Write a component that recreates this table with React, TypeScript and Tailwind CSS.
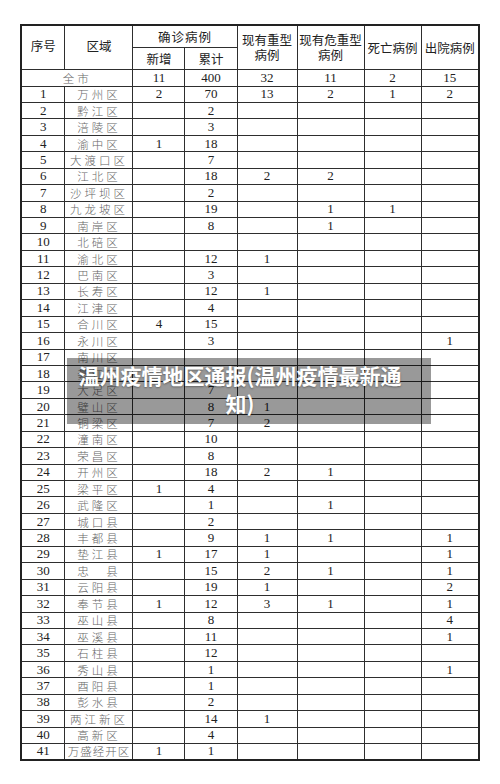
type Row = [string, string, string, string, string, string, string, string];

const rows: Row[] = [
  ['1', '万州区', '2', '70', '13', '2', '1', '2'],
  ['2', '黔江区', '', '2', '', '', '', ''],
  ['3', '涪陵区', '', '3', '', '', '', ''],
  ['4', '渝中区', '1', '18', '', '', '', ''],
  ['5', '大渡口区', '', '7', '', '', '', ''],
  ['6', '江北区', '', '18', '2', '2', '', ''],
  ['7', '沙坪坝区', '', '2', '', '', '', ''],
  ['8', '九龙坡区', '', '19', '', '1', '1', ''],
  ['9', '南岸区', '', '8', '', '1', '', ''],
  ['10', '北碚区', '', '', '', '', '', ''],
  ['11', '渝北区', '', '12', '1', '', '', ''],
  ['12', '巴南区', '', '3', '', '', '', ''],
  ['13', '长寿区', '', '12', '1', '', '', ''],
  ['14', '江津区', '', '4', '', '', '', ''],
  ['15', '合川区', '4', '15', '', '', '', ''],
  ['16', '永川区', '', '3', '', '', '', '1'],
  ['17', '南川区', '', '', '', '', '', ''],
  ['18', '綦江区', '', '', '', '', '', ''],
  ['19', '大足区', '', '7', '', '', '', ''],
  ['20', '璧山区', '', '8', '1', '', '', ''],
  ['21', '铜梁区', '', '7', '2', '', '', ''],
  ['22', '潼南区', '', '10', '', '', '', ''],
  ['23', '荣昌区', '', '8', '', '', '', ''],
  ['24', '开州区', '', '18', '2', '1', '', ''],
  ['25', '梁平区', '1', '4', '', '', '', ''],
  ['26', '武隆区', '', '1', '', '1', '', ''],
  ['27', '城口县', '', '2', '', '', '', ''],
  ['28', '丰都县', '', '9', '1', '1', '', '1'],
  ['29', '垫江县', '1', '17', '1', '', '', '1'],
  ['30', '忠　县', '', '15', '2', '1', '', '1'],
  ['31', '云阳县', '', '19', '1', '', '', '2'],
  ['32', '奉节县', '1', '12', '3', '1', '', '1'],
  ['33', '巫山县', '', '8', '', '', '', '4'],
  ['34', '巫溪县', '', '11', '', '', '', '1'],
  ['35', '石柱县', '', '12', '', '', '', ''],
  ['36', '秀山县', '', '1', '', '', '', '1'],
  ['37', '酉阳县', '', '1', '', '', '', ''],
  ['38', '彭水县', '', '2', '', '', '', ''],
  ['39', '两江新区', '', '14', '1', '', '', ''],
  ['40', '高新区', '', '4', '', '', '', ''],
  ['41', '万盛经开区', '1', '1', '', '', '', ''],
];

const cell = 'border border-[#2e2e2e] p-0 text-center align-middle';
const num = "font-['Liberation_Serif',serif] text-[13px] leading-[14px] text-[#222]";
const cn = "font-['Noto_Sans_CJK_SC',sans-serif] text-[12.5px] leading-[15px] text-[#222]";
const area =
  "font-['Noto_Sans_CJK_SC',sans-serif] font-light text-[11.5px] leading-[14px] whitespace-nowrap text-[#666]";

function areaClass(name: string) {
  return name.length >= 5 ? `${area} tracking-[1px]` : `${area} tracking-[3px]`;
}

export default function App() {
  return (
    <div className="relative w-[500px] h-[784px] bg-white overflow-hidden">
      <table className="mx-auto mt-[24px] w-[458px] table-fixed border-collapse border-2 border-[#222]">
        <colgroup>
          <col className="w-[44px]" />
          <col className="w-[68px]" />
          <col className="w-[52px]" />
          <col className="w-[52px]" />
          <col className="w-[60px]" />
          <col className="w-[67px]" />
          <col className="w-[57px]" />
          <col className="w-[58px]" />
        </colgroup>
        <thead>
          <tr className="h-[22px]">
            <th rowSpan={2} className={`${cell} ${cn} font-normal`}>
              <div className="-mt-[4px]">序号</div>
            </th>
            <th rowSpan={2} className={`${cell} ${cn} font-normal`}>
              <div className="-mt-[4px]">区域</div>
            </th>
            <th colSpan={2} className={`${cell} ${cn} font-normal tracking-[1px]`}>确诊病例</th>
            <th rowSpan={2} className={`${cell} ${cn} font-normal`}>
              现有重型
              <br />
              病例
            </th>
            <th rowSpan={2} className={`${cell} ${cn} font-normal`}>
              现有危重型
              <br />
              病例
            </th>
            <th rowSpan={2} className={`${cell} ${cn} font-normal`}>死亡病例</th>
            <th rowSpan={2} className={`${cell} ${cn} font-normal`}>出院病例</th>
          </tr>
          <tr className="h-[22px]">
            <th className={`${cell} ${cn} font-normal`}>新增</th>
            <th className={`${cell} ${cn} font-normal`}>累计</th>
          </tr>
        </thead>
        <tbody>
          <tr className="h-[17px]">
            <td colSpan={2} className={`${cell} ${area} tracking-[3px]`}>全市</td>
            <td className={`${cell} ${num}`}>11</td>
            <td className={`${cell} ${num}`}>400</td>
            <td className={`${cell} ${num}`}>32</td>
            <td className={`${cell} ${num}`}>11</td>
            <td className={`${cell} ${num}`}>2</td>
            <td className={`${cell} ${num}`}>15</td>
          </tr>
          {rows.map((r) => (
            <tr key={r[0]} className="h-[16.44px]">
              {r.map((v, i) => (
                <td key={i} className={`${cell} ${i === 1 ? areaClass(v) : num}`}>
                  {v}
                </td>
              ))}
            </tr>
          ))}
        </tbody>
      </table>

      <div className="absolute left-[67px] top-[358px] w-[364px] h-[66px] bg-black/40 pl-[8px] pr-[26px] py-[3px]">
        <p className="text-center whitespace-nowrap font-['Noto_Sans_CJK_SC',sans-serif] font-bold text-[21px] leading-[28px] text-white [text-shadow:0_1px_2px_rgba(0,0,0,0.35)]">
          温州疫情地区通报(温州疫情最新通
          <br />
          知)
        </p>
      </div>
    </div>
  );
}
